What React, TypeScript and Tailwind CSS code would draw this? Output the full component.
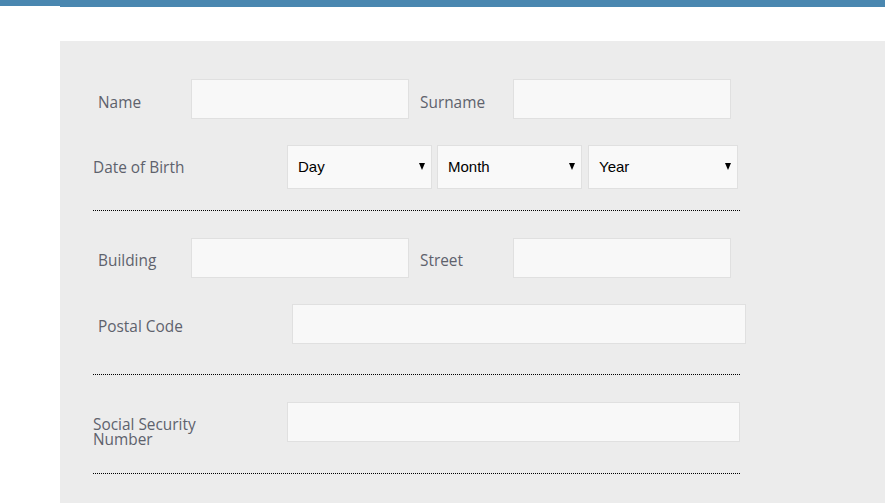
import React from "react";

const label = "text-[15.4px] text-[#5e626c] leading-none";
const input =
  "h-[40px] bg-[#f8f8f8] border border-[#e0e0e0] outline-none";

function Sel({ text, w }: { text: string; w: string }) {
  return (
    <div className={`relative h-[44px] ${w}`}>
      <select
        className="appearance-none w-full h-full bg-[#f9f9f9] border border-[#e0e0e0] pl-[10px] text-[15px] text-black outline-none"
        style={{ fontFamily: '"Liberation Sans", Arial, sans-serif' }}
        defaultValue={text}
      >
        <option>{text}</option>
      </select>
      <span className="pointer-events-none absolute right-[7px] top-[18px] w-0 h-0 border-l-[3.5px] border-r-[3.5px] border-t-[7px] border-l-transparent border-r-transparent border-t-black" />
    </div>
  );
}

function Hr() {
  return <div className="w-[647px] border-t border-dotted border-black" />;
}

export default function App() {
  return (
    <div
      className="w-[885px] h-[503px] bg-white overflow-hidden relative"
      style={{ fontFamily: '"Open Sans", sans-serif' }}
    >
      <div className="h-[6px] bg-[#4a87b0]" />
      <div className="ml-[60px] h-px bg-[#4a87b0]" />
      <div className="ml-[60px] mt-[34px] bg-[#ececec] h-[462px] pl-[33px] pt-[38px]">
        {/* Row 1 */}
        <div className="flex items-center h-[40px]">
          <span className={`${label} w-[98px] pl-[5px] pt-[8px]`}>Name</span>
          <input className={`${input} w-[218px]`} />
          <span className={`${label} ml-[11px] w-[93px] pt-[8px]`}>Surname</span>
          <input className={`${input} w-[218px]`} />
        </div>
        {/* Row 2 */}
        <div className="flex items-center mt-[26px] h-[44px]">
          <span className={`${label} w-[194px] pt-[1px]`}>Date of Birth</span>
          <Sel text="Day" w="w-[145px]" />
          <div className="w-[5px]" />
          <Sel text="Month" w="w-[145px]" />
          <div className="w-[6px]" />
          <Sel text="Year" w="w-[150px]" />
        </div>
        <div className="mt-[21px]">
          <Hr />
        </div>
        {/* Row 3 */}
        <div className="flex items-center mt-[27px] h-[40px]">
          <span className={`${label} w-[98px] pl-[5px] pt-[6px]`}>Building</span>
          <input className={`${input} w-[218px]`} />
          <span className={`${label} ml-[11px] w-[93px] pt-[6px]`}>Street</span>
          <input className={`${input} w-[218px]`} />
        </div>
        {/* Row 4 */}
        <div className="flex items-center mt-[26px] h-[39px]">
          <span className={`${label} w-[199px] pl-[5px] pt-[7px]`}>Postal Code</span>
          <input className={`${input} h-[39px] w-[454px]`} />
        </div>
        <div className="mt-[31px]">
          <Hr />
        </div>
        {/* Row 5 */}
        <div className="flex items-center mt-[27px] h-[40px]">
          <span className="w-[194px] text-[15.4px] text-[#5e626c] leading-[15px] pt-[19px]">
            Social Security
            <br />
            Number
          </span>
          <input className={`${input} w-[453px]`} />
        </div>
        <div className="mt-[31px]">
          <Hr />
        </div>
      </div>
    </div>
  );
}
